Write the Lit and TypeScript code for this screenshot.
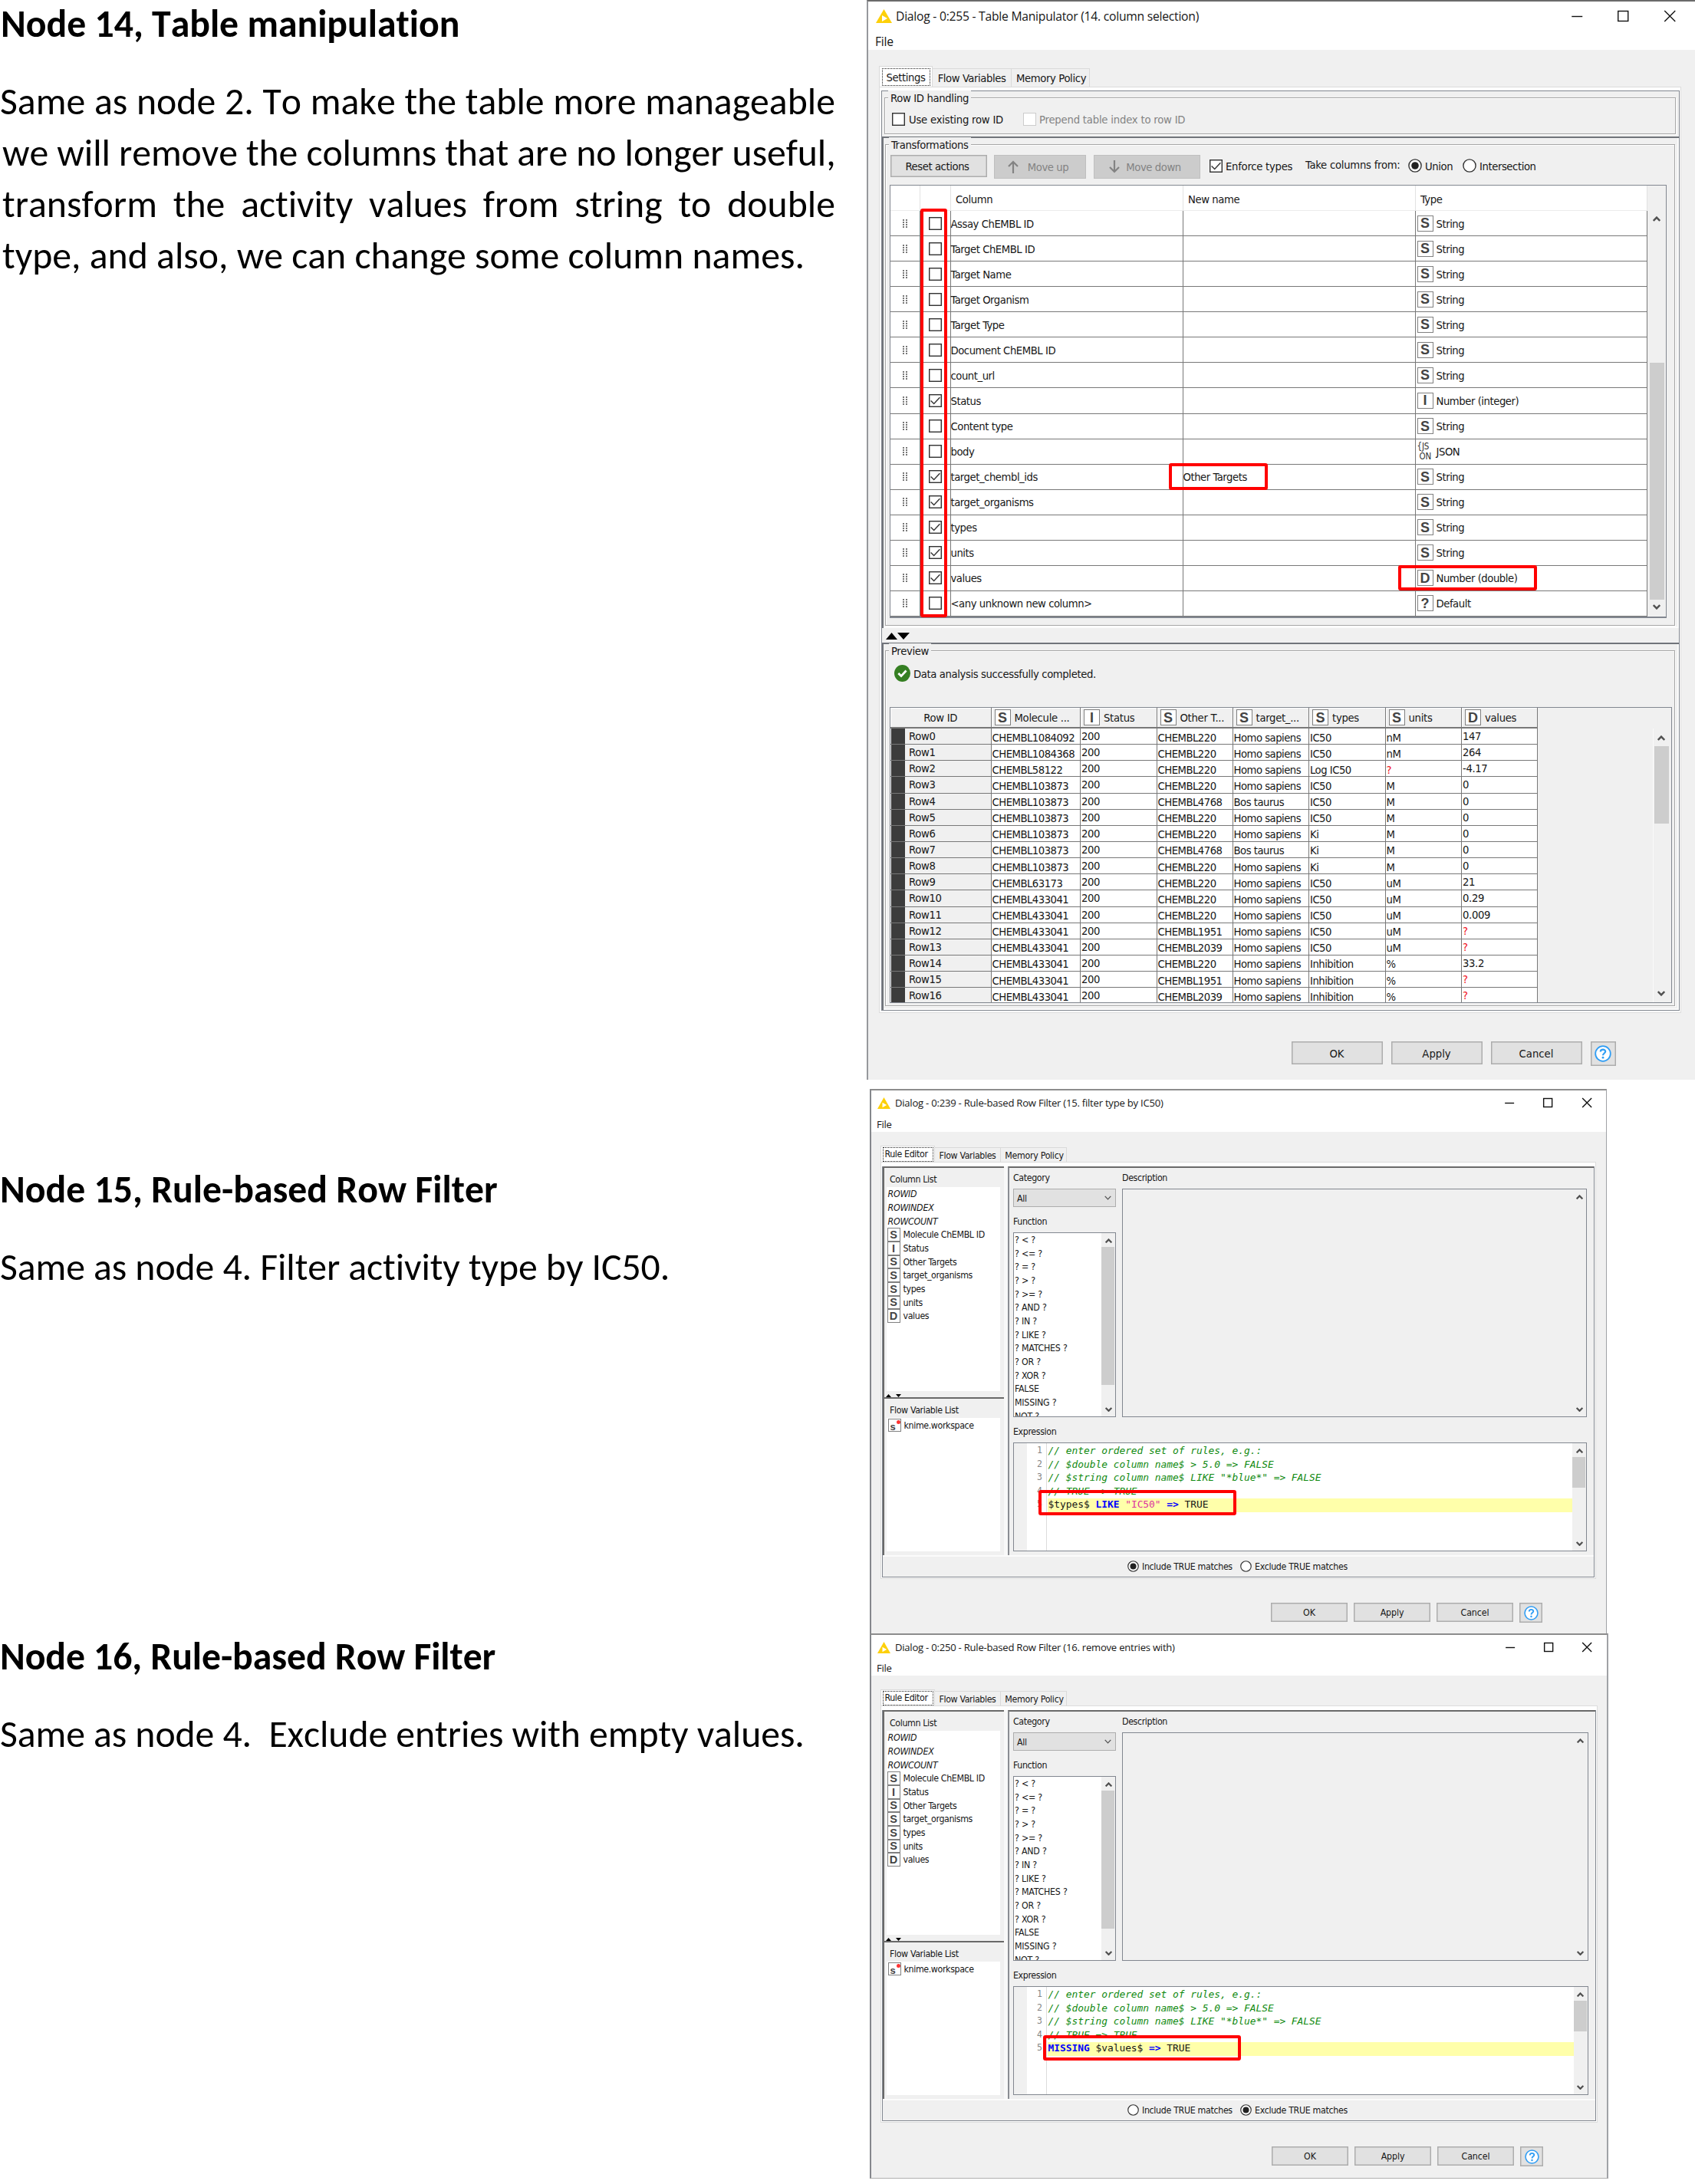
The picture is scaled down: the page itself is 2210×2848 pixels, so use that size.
import { LitElement, html, css, svg, nothing } from "lit";
import { customElement, property } from "lit/decorators.js";
import { classMap } from "lit/directives/class-map.js";

const shared = css`
  * { box-sizing: border-box; }
  :host { display: block; font-family: "DejaVu Sans Condensed", "DejaVu Sans", sans-serif; font-stretch: condensed; color: #161616; white-space: nowrap; }
  svg { display: block; flex: none; }
  .type { display: flex; align-items: center; justify-content: center; flex: none; width: 21px; height: 21px; background: #fff; border: 1px solid #808080; color: #444; font: bold 18px/1 "Liberation Sans", Arial, sans-serif; letter-spacing: 0; }
  .json { display: flex; flex-direction: column; flex: none; width: 21px; font: 11.5px/13px "DejaVu Sans Condensed", "DejaVu Sans", sans-serif; letter-spacing: -0.2px; color: #333; }
  .json .second { padding-left: 3px; }
  .check { flex: none; width: 17px; height: 17px; background: #fff; border: 1px solid #333; box-shadow: inset 0 0 0 0.5px #555; }
  .check.off { border-color: #ccc; box-shadow: none; }
  .bar { display: flex; flex-direction: column; align-items: center; justify-content: space-between; flex: none; background: #f0f0f0; }
  .bar .track { flex: 1; width: 100%; }
  .bar .thumb { background: #cdcdcd; }
  .win { display: flex; flex-direction: column; border-left: 2px solid #96989c; border-top: 2px solid #6a6a6a; background: #f0f0f0; height: 100%; }
  .title { display: flex; align-items: center; background: #fff; font-family: "Open Sans", "Noto Sans", sans-serif; font-stretch: normal; }
  .title .controls { display: flex; margin-left: auto; }
  .title .controls svg { overflow: visible; }
  .menu { display: flex; align-items: center; background: #fff; font-family: "Open Sans", "Noto Sans", sans-serif; font-stretch: normal; }
  .tabs { display: flex; align-items: flex-end; }
  .tab { display: flex; align-items: center; justify-content: center; border: 1px solid #dadada; border-left: 0; border-bottom: 0; }
  .tab.on { background: #fff; border-left: 1px solid #dadada; }
  .focus { display: flex; align-items: center; justify-content: center; border: 1px dotted #222; padding-right: 2px; }
  .pane { border: 1px solid #dcdcdc; background: #fff; }
  .inner { display: flex; flex-direction: column; border: 1px solid #828790; background: #f0f0f0; }
  .buttons { display: flex; }
  .btn { display: flex; align-items: center; justify-content: center; background: #e1e1e1; border: 1px solid #adadad; box-shadow: inset 0 0 0 0.5px #adadad; }
  .btn.off { background: #ccc; border-color: #bfbfbf; box-shadow: none; color: #838383; }
  .mark { position: absolute; border: 4px solid #f00; border-radius: 3px; }
`;

const logo = (w: number, h: number) => html`<svg width=${w} height=${h} viewBox="0 0 21 18" preserveAspectRatio="none"><path d="M10.5 0L21 18H0Z" fill="#fdd00a"/><path d="M8 8L15 12L8 16Z" fill="#fff"/></svg>`;
const controls = (cell: number, s: number) => html`<div class="controls">${[0, 1, 2].map((i) => html`<svg width=${cell} height=${s} viewBox="0 0 ${cell} ${s}" fill="none" stroke="#111" stroke-width="1.4">${
  i === 0 ? svg`<path d="M${cell / 2 - s / 2} ${s / 2 + 0.5}h${s}"/>`
  : i === 1 ? svg`<rect x=${cell / 2 - s / 2 + 0.5} y="0.5" width=${s - 1} height=${s - 1}/>`
  : svg`<path d="M${cell / 2 - s / 2} 0l${s} ${s}M${cell / 2 + s / 2} 0l${-s} ${s}"/>`}</svg>`)}</div>`;
const chevron = (dir: "up" | "down", w = 10, stroke = 2.4) => html`<svg width=${w} height=${w * 0.7} viewBox="0 0 10 7" fill="none" stroke="#505050" stroke-width=${stroke}><path d=${dir === "up" ? "M0.8 6L5 1.6L9.2 6" : "M0.8 1L5 5.4L9.2 1"}/></svg>`;
const typeIcon = (t: string) => t === "JSON"
  ? html`<div class="json"><span>{JS</span><span class="second">ON</span></div>`
  : html`<div class="type">${t}</div>`;
const check = (on: boolean, off = false) => html`<div class=${classMap({ check: true, off })}>${on ? html`<svg width="15" height="15" viewBox="0 0 14 14" fill="none" stroke="#333" stroke-width="1.3"><path d="M1.5 7L5.3 10.8L12.5 3"/></svg>` : nothing}</div>`;
const radio = (on: boolean, s: number) => html`<svg width=${s} height=${s} viewBox="0 0 18 18"><circle cx="9" cy="9" r="8.1" fill="#fff" stroke="#333" stroke-width="1.4"/>${on ? svg`<circle cx="9" cy="9" r="4.8" fill="#222"/>` : nothing}</svg>`;
const help = (s: number) => html`<svg width=${s} height=${s} viewBox="0 0 22 22"><circle cx="11" cy="11" r="9.8" fill="#fff" stroke="#2f9df4" stroke-width="1.8"/><path d="M7.8 8.6C7.8 4.6 14.3 4.7 14.2 8.3C14.1 10.5 11 10.6 11 13.2" fill="none" stroke="#2f9df4" stroke-width="2.2"/><circle cx="11" cy="16.2" r="1.4" fill="#2f9df4"/></svg>`;

type ColumnRow = [name: string, on: boolean, renamed: string, icon: string, type: string];
const COLUMNS: ColumnRow[] = [
  ["Assay ChEMBL ID", false, "", "S", "String"],
  ["Target ChEMBL ID", false, "", "S", "String"],
  ["Target Name", false, "", "S", "String"],
  ["Target Organism", false, "", "S", "String"],
  ["Target Type", false, "", "S", "String"],
  ["Document ChEMBL ID", false, "", "S", "String"],
  ["count_url", false, "", "S", "String"],
  ["Status", true, "", "I", "Number (integer)"],
  ["Content type", false, "", "S", "String"],
  ["body", false, "", "JSON", "JSON"],
  ["target_chembl_ids", true, "Other Targets", "S", "String"],
  ["target_organisms", true, "", "S", "String"],
  ["types", true, "", "S", "String"],
  ["units", true, "", "S", "String"],
  ["values", true, "", "D", "Number (double)"],
  ["<any unknown new column>", false, "", "?", "Default"],
];
const HEADS: [string, string][] = [["S", "Molecule ..."], ["I", "Status"], ["S", "Other T..."], ["S", "target_..."], ["S", "types"], ["S", "units"], ["D", "values"]];
const H = "Homo sapiens", B = "Bos taurus";
const DATA: string[][] = [
  ["CHEMBL1084092", "200", "CHEMBL220", H, "IC50", "nM", "147"],
  ["CHEMBL1084368", "200", "CHEMBL220", H, "IC50", "nM", "264"],
  ["CHEMBL58122", "200", "CHEMBL220", H, "Log IC50", "?", "-4.17"],
  ["CHEMBL103873", "200", "CHEMBL220", H, "IC50", "M", "0"],
  ["CHEMBL103873", "200", "CHEMBL4768", B, "IC50", "M", "0"],
  ["CHEMBL103873", "200", "CHEMBL220", H, "IC50", "M", "0"],
  ["CHEMBL103873", "200", "CHEMBL220", H, "Ki", "M", "0"],
  ["CHEMBL103873", "200", "CHEMBL4768", B, "Ki", "M", "0"],
  ["CHEMBL103873", "200", "CHEMBL220", H, "Ki", "M", "0"],
  ["CHEMBL63173", "200", "CHEMBL220", H, "IC50", "uM", "21"],
  ["CHEMBL433041", "200", "CHEMBL220", H, "IC50", "uM", "0.29"],
  ["CHEMBL433041", "200", "CHEMBL220", H, "IC50", "uM", "0.009"],
  ["CHEMBL433041", "200", "CHEMBL1951", H, "IC50", "uM", "?"],
  ["CHEMBL433041", "200", "CHEMBL2039", H, "IC50", "uM", "?"],
  ["CHEMBL433041", "200", "CHEMBL220", H, "Inhibition", "%", "33.2"],
  ["CHEMBL433041", "200", "CHEMBL1951", H, "Inhibition", "%", "?"],
  ["CHEMBL433041", "200", "CHEMBL2039", H, "Inhibition", "%", "?"],
];

@customElement("table-manipulator")
class TableManipulator extends LitElement {
  static styles = [shared, css`
    :host { position: relative; width: 1080px; height: 1408px; font-size: 14.7px; letter-spacing: -0.42px; }
    .title { height: 39px; padding: 0 3px 2px 10px; font-size: 15.7px; letter-spacing: -0.25px; }
    .title .name { padding-left: 5px; }
    .menu { height: 24px; padding: 1px 0 0 9px; font-size: 15.7px; letter-spacing: -0.28px; }
    .body { padding: 21px 17px 0 14px; }
    .tabs { height: 27px; }
    .tab { height: 24px; }
    .tab.on { width: 70px; height: 27px; }
    .tab.fv { width: 103px; }
    .tab.mp { width: 102px; letter-spacing: -0.36px; padding-left: 2px; }
    .focus { width: 63px; height: 23px; padding: 0; }
    .pane { width: 1046px; height: 1208px; padding: 4px 1px 3px 2px; }
    .inner { height: 1200px; }
    .group { border: 1px solid #a6a6a6; box-shadow: 1px 1px 0 #fff, inset 1px 1px 0 #fff; margin-left: 2px; width: 1030px; }
    .legend { width: fit-content; height: 18px; line-height: 19px; margin: -10px 0 0 4px; padding: 0 3px; background: #f0f0f0; letter-spacing: -0.34px; }
    .ids { height: 59px; padding: 8px 0 0 1px; }
    .ids .group { height: 48px; width: 1032px; }
    .ids .line { display: flex; align-items: center; padding: 11px 0 0 9px; height: 28px; }
    .ids .lbl { padding: 0 0 0 5px; }
    .ids .first { width: 154px; letter-spacing: -0.22px; }
    .ids .muted { color: #838383; letter-spacing: -0.2px; padding-left: 4px; }
    .panel { border-left: 2px solid #70747a; border-top: 2px solid #70747a; box-shadow: inset -2px -2px 0 #fbfbfb; padding-top: 8px; }
    .panel.a { height: 641px; }
    .panel.a .group { height: 628px; }
    .tools { display: flex; margin-top: 5px; height: 31px; padding-left: 6px; }
    .tools .reset { width: 126px; height: 29px; margin-right: 9px; padding: 0 4px 1px 0; }
    .tools .up { width: 120px; margin-right: 10px; gap: 12px; padding-right: 5px; }
    .tools .down { width: 139px; margin-right: 12px; gap: 8px; padding-right: 5px; }
    .tools .opt { display: flex; align-items: center; height: 29px; gap: 4px; padding-bottom: 1px; }
    .tools .enforce { width: 125px; letter-spacing: -0.26px; }
    .tools .from { width: 134px; padding-bottom: 5px; letter-spacing: -0.25px; }
    .tools .union { width: 71px; }
    .grid { display: flex; margin: 8px 0 0 5px; width: 1013px; height: 565px; border: 1px solid #828790; border-bottom-width: 2px; background: #fff; }
    .row, .heads { display: grid; grid-template-columns: 38.5px 40px 303px 303px 302px; }
    .heads { height: 33px; }
    .heads div { display: flex; align-items: center; padding: 2px 0 0 6.5px; border-right: 1px solid #e2e2e2; border-bottom: 1px solid #ececec; }
    .row { height: 33.07px; letter-spacing: -0.45px; }
    .row > div { display: flex; align-items: center; border-right: 1px solid #787878; border-bottom: 1px solid #787878; }
    .row > .c { justify-content: center; }
    .row > .t { gap: 4px; padding-left: 2px; }
    .grid .bar { width: 24px; padding: 34px 0 3px; }
    .grid .track { padding: 177px 2px 0 3px; }
    .grid .thumb { height: 309px; }
    .grid .chev { padding: 6px 0 7px; }
    .divider { height: 19px; display: flex; padding: 6px 0 0 4px; }
    .panel.b { height: 479px; }
    .panel.b .group { height: 464px; }
    .status { display: flex; align-items: center; height: 22px; margin: 10px 0 0 11px; gap: 4px; letter-spacing: -0.38px; }
    .preview { display: flex; margin: 33px 0 0 5px; width: 1020px; height: 386px; border: 1px solid #828790; overflow: hidden; }
    .prow { display: grid; grid-template-columns: 131.5px 116.5px 99.5px 99px 99.5px 99.5px 99.5px 99px; height: 21.15px; line-height: 20px; letter-spacing: -0.5px; }
    .prow > div { border-right: 1px solid #787878; border-bottom: 1px solid #787878; padding-left: 1px; background: #fff; overflow: hidden; }
    .prow > .s { padding-top: 1.5px; }
    .prow > .n { letter-spacing: -0.35px; }
    .prow > .miss { color: #f01020; }
    .prow > .id { display: flex; background: #f0f0f0; padding-left: 1px; letter-spacing: -0.35px; }
    .sw { width: 18px; background: #3c3c3c; margin-right: 5px; flex: none; }
    .prow.top { height: 27px; letter-spacing: -0.3px; }
    .prow.top > div { display: flex; align-items: center; gap: 5px; padding-left: 4px; background: #f0f0f0; border-bottom: 2px solid #787878; box-shadow: inset 1px 1px 0 #fff; }
    .prow.top > .rid { justify-content: center; padding: 0; }
    .preview .bar { width: 21px; margin: 27px 3px 0 auto; border-left: 1px solid #fafafa; }
    .preview .bar .track { padding: 0 0 0 1px; }
    .preview .thumb { height: 101px; }
    .preview .chev { padding: 9px 0 7px; }
    .preview .chev.dn { padding: 7px 0 8px; }
    .buttons { padding: 37px 0 0 538px; gap: 11px; letter-spacing: 0; }
    .buttons .btn { width: 119px; height: 30px; padding-right: 1px; }
    .buttons .btn.q { width: 33px; height: 32px; }
    .m1 { left: 70px; top: 272px; width: 35px; height: 533px; }
    .m2 { left: 394px; top: 604px; width: 129px; height: 35px; }
    .m3 { left: 693px; top: 737px; width: 181px; height: 33px; }
  `];
  render() {
    const arrow = (d: string) => html`<svg width="14" height="17" viewBox="0 0 14 17" fill="none" stroke="#838383" stroke-width="2.2"><path d=${d}/></svg>`;
    return html`<div class="win">
      <div class="title">${logo(21, 18)}<span class="name">Dialog - 0:255 - Table Manipulator (14. column selection)</span>${controls(60.5, 14)}</div>
      <div class="menu">File</div>
      <div class="body">
        <div class="tabs"><div class="tab on"><div class="focus">Settings</div></div><div class="tab fv">Flow Variables</div><div class="tab mp">Memory Policy</div></div>
        <div class="pane"><div class="inner">
          <div class="ids"><div class="group"><div class="legend">Row ID handling</div>
            <div class="line">${check(false)}<span class="lbl first">Use existing row ID</span>${check(false, true)}<span class="lbl muted">Prepend table index to row ID</span></div></div></div>
          <div class="panel a"><div class="group"><div class="legend">Transformations</div>
            <div class="tools">
              <div class="btn reset">Reset actions</div>
              <div class="btn off up">${arrow("M7 17V2M1 8L7 2L13 8")}Move up</div>
              <div class="btn off down">${arrow("M7 0V15M1 9L7 15L13 9")}Move down</div>
              <div class="opt enforce">${check(true)}Enforce types</div>
              <div class="opt from">Take columns from:</div>
              <div class="opt union">${radio(true, 18)}Union</div>
              <div class="opt">${radio(false, 18)}Intersection</div>
            </div>
            <div class="grid"><div>
              <div class="heads"><div></div><div></div><div>Column</div><div>New name</div><div>Type</div></div>
              ${COLUMNS.map(([name, on, renamed, icon, type]) => html`<div class="row">
                <div class="c"><svg width="8" height="11" viewBox="0 0 8 11" shape-rendering="crispEdges" fill="#777">${[0, 3, 6, 9].map((y) => svg`<rect x="1" y=${y} width="2" height="2"/><rect x="5" y=${y} width="2" height="2"/>`)}</svg></div>
                <div class="c">${check(on)}</div><div>${name}</div><div>${renamed}</div><div class="t">${typeIcon(icon)}${type}</div></div>`)}
            </div><div class="bar"><div class="chev">${chevron("up")}</div><div class="track"><div class="thumb"></div></div><div class="chev">${chevron("down")}</div></div></div>
          </div></div>
          <div class="divider"><svg width="32" height="9" viewBox="0 0 32 9"><path d="M1 9L8.5 0L16 9ZM16 0H32L24 9Z" fill="#000"/></svg></div>
          <div class="panel b"><div class="group"><div class="legend">Preview</div>
            <div class="status"><svg width="21" height="22" viewBox="0 0 21 22"><ellipse cx="10.5" cy="11" rx="10.5" ry="11" fill="#357f22"/><path d="M5.3 11L9 14.6L15.5 7.5" fill="none" stroke="#fff" stroke-width="2.8"/></svg>Data analysis successfully completed.</div>
            <div class="preview"><div>
              <div class="prow top"><div class="rid">Row ID</div>${HEADS.map(([t, n]) => html`<div>${typeIcon(t)}${n}</div>`)}</div>
              ${DATA.map((r, i) => html`<div class="prow"><div class="id"><div class="sw"></div>Row${i}</div>${r.map((v, c) => html`<div class=${classMap({ s: c !== 1 && c !== 6, n: c === 1 || c === 6, miss: v === "?" })}>${v}</div>`)}</div>`)}
            </div><div class="bar"><div class="chev">${chevron("up")}</div><div class="track"><div class="thumb"></div></div><div class="chev dn">${chevron("down")}</div></div></div>
          </div></div>
        </div></div>
        <div class="buttons"><div class="btn">OK</div><div class="btn">Apply</div><div class="btn">Cancel</div><div class="btn q">${help(22)}</div></div>
      </div>
    </div><div class="mark m1"></div><div class="mark m2"></div><div class="mark m3"></div>`;
  }
}

const FIELDS: [string, string][] = [["S", "Molecule ChEMBL ID"], ["I", "Status"], ["S", "Other Targets"], ["S", "target_organisms"], ["S", "types"], ["S", "units"], ["D", "values"]];
const FUNCTIONS = ["? < ?", "? <= ?", "? = ?", "? > ?", "? >= ?", "? AND ?", "? IN ?", "? LIKE ?", "? MATCHES ?", "? OR ?", "? XOR ?", "FALSE", "MISSING ?", "NOT ?"];
const COMMENTS = ["// enter ordered set of rules, e.g.:", "// $double column name$ > 5.0 => FALSE", "// $string column name$ LIKE \"*blue*\" => FALSE", "// TRUE => TRUE"];

@customElement("rule-filter")
class RuleFilter extends LitElement {
  @property() name = "";
  @property({ type: Boolean }) exclude = false;
  @property({ attribute: false }) rule: [string, string][] = [];
  static styles = [shared, css`
    :host { position: relative; width: 961px; height: 710px; font-size: 12.3px; letter-spacing: -0.37px; }
    :host([exclude]) { width: 962.5px; height: 711px; }
    .win { border-left-color: #85878c; border-right: 1px solid #a0a2a6; border-top-color: #8c8c8c; }
    :host([exclude]) .win { border-bottom: 1px solid #b0b0b0; border-right-width: 2px; }
    .title { height: 35px; padding: 0 0 3px 8px; font-size: 13.1px; letter-spacing: -0.24px; }
    .title .name { padding-left: 6px; }
    .menu { height: 19px; padding: 0 0 2px 7px; font-size: 13.1px; letter-spacing: -0.25px; }
    .body { padding: 18px 0 0 12px; }
    :host([exclude]) .menu { height: 18px; }
    .tabs { height: 21px; }
    .tab { height: 19px; }
    .tab.on { width: 71px; height: 21px; }
    .tab.fv { width: 86px; padding-top: 1px; }
    .tab.mp { width: 86px; letter-spacing: -0.3px; padding: 1px 0 0 2px; }
    .focus { width: 66px; height: 19px; padding-right: 4px; }
    .pane { width: 933px; height: 544px; padding: 5px 1px 1px; }
    .inner { height: 536px; border-top: 0; }
    .split { display: flex; height: 507px; }
    .left { width: 158px; border-left: 2px solid #696969; display: flex; flex-direction: column; }
    .cap { border-top: 2px solid #696969; height: 27px; padding: 8px 0 0 7px; line-height: 15px; }
    .list { background: #fff; margin: 0 5px 0 3px; height: 266px; padding-top: 0.5px; }
    .list.vars { height: 174px; padding-top: 1px; }
    .arrows { height: 8px; padding: 4px 0 0 2px; }
    .it { display: flex; align-items: center; height: 17.67px; gap: 4px; padding-left: 0.5px; }
    .it.sys { font-style: italic; padding-left: 1.5px; letter-spacing: -0.25px; }
    .type { width: 17px; height: 17.67px; font-size: 14.5px; }
    .type.var { position: relative; font-size: 13px; margin-left: 1px; padding: 3px 4px 0 0; height: 17px; }
    .dot { position: absolute; right: 0; top: 1px; width: 5px; height: 5px; border-radius: 50%; background: #f33; }
    .gap { width: 5px; background: #f8f8f8; }
    .right { flex: 1; border-left: 2px solid #8a8d92; border-top: 2px solid #696969; padding-left: 5px; }
    .upper { display: flex; gap: 8px; height: 325px; }
    .lab { height: 27px; line-height: 27px; }
    .lab.low { height: 33px; padding-top: 6px; }
    .combo { display: flex; align-items: center; justify-content: space-between; width: 134px; height: 24px; background: #e1e1e1; border: 1px solid #adadad; padding: 1px 5px 0 4px; }
    .box { display: flex; border: 1px solid #828790; }
    .fn { width: 134px; height: 241px; background: #fff; justify-content: space-between; }
    .fns { padding: 1px 0 0 1px; overflow: hidden; line-height: 17.65px; letter-spacing: -0.22px; }
    .desc { width: 606px; height: 298px; justify-content: flex-end; }
    .bar { width: 18px; padding: 7px 0 6px; }
    .bar .track { padding: 5px 1px 4px 0; }
    .fn .thumb { height: 180px; }
    .ed { width: 748px; height: 142px; background: #fff; }
    .ed .thumb { height: 40px; }
    .fold { width: 17px; background: #f0f0f0; }
    .nums { width: 26px; border-right: 1px solid #dcdcdc; padding: 1px 5px 0 0; text-align: right; color: #868686; }
    .code, .nums { font-family: "DejaVu Sans Mono", monospace; font-stretch: normal; font-size: 12.9px; line-height: 17.5px; letter-spacing: -0.02px; }
    .nums { font-size: 11.5px; }
    .code { flex: 1; white-space: pre; padding-top: 1px; }
    .ln { padding-left: 1.5px; height: 17.5px; }
    .cm { color: #118a11; font-style: italic; }
    .cur { background: #ffffaa; margin: 1px 0 0 1px; padding-left: 0.5px; line-height: 16.5px; }
    .kw { color: #00f; font-weight: bold; }
    .str { color: #dc32a0; }
    .foot { display: flex; align-items: center; flex: 1; border-top: 2px solid #fbfbfb; padding: 0 0 1px 319px; }
    .foot .r1 { width: 132px; padding-left: 4px; letter-spacing: -0.33px; }
    .foot .r2 { padding-left: 4px; letter-spacing: -0.33px; }
    .buttons { padding: 31px 0 0 509px; gap: 8px; letter-spacing: -0.1px; }
    .buttons .btn { width: 100px; height: 25px; }
    .buttons .btn.q { width: 30px; height: 26px; }
    :host([exclude]) .pane { width: 934.5px; }
    :host([exclude]) .desc { width: 607.5px; }
    :host([exclude]) .ed { width: 749.5px; }
    :host([exclude]) .buttons { padding-left: 510px; }
    .mark { left: 219.5px; top: 523px; width: 258px; height: 33px; }
    :host([exclude]) .mark { left: 226px; top: 524px; height: 33px; }
  `];
  render() {
    const bar = (thumb: boolean) => html`<div class="bar">${chevron("up", 9)}<div class="track">${thumb ? html`<div class="thumb"></div>` : nothing}</div>${chevron("down", 9)}</div>`;
    return html`<div class="win">
      <div class="title">${logo(17, 15)}<span class="name">${this.name}</span>${controls(50.3, 12)}</div>
      <div class="menu">File</div>
      <div class="body">
        <div class="tabs"><div class="tab on"><div class="focus">Rule Editor</div></div><div class="tab fv">Flow Variables</div><div class="tab mp">Memory Policy</div></div>
        <div class="pane"><div class="inner">
          <div class="split">
            <div class="left">
              <div class="cap">Column List</div>
              <div class="list">${["ROWID", "ROWINDEX", "ROWCOUNT"].map((t) => html`<div class="it sys">${t}</div>`)}${FIELDS.map(([t, n]) => html`<div class="it">${typeIcon(t)}${n}</div>`)}</div>
              <div class="arrows"><svg width="22" height="4" viewBox="0 0 22 4"><path d="M0 4L3.5 0L7 4ZM13 0H20L16.5 4Z" fill="#000"/></svg></div>
              <div class="cap">Flow Variable List</div>
              <div class="list vars"><div class="it"><div class="type var">s<span class="dot"></span></div>knime.workspace</div></div>
            </div>
            <div class="gap"></div>
            <div class="right">
              <div class="upper">
                <div><div class="lab">Category</div><div class="combo">All${chevron("down", 9, 1.4)}</div><div class="lab low">Function</div>
                  <div class="box fn"><div class="fns">${FUNCTIONS.map((f) => html`<div>${f}</div>`)}</div>${bar(true)}</div></div>
                <div><div class="lab">Description</div><div class="box desc">${bar(false)}</div></div>
              </div>
              <div class="lab low">Expression</div>
              <div class="box ed"><div class="fold"></div><div class="nums">${[1, 2, 3, 4, 5].map((n) => html`<div>${n}</div>`)}</div>
                <div class="code">${COMMENTS.map((c) => html`<div class="ln cm">${c}</div>`)}<div class="ln cur">${this.rule.map(([k, t]) => html`<span class=${k}>${t}</span>`)}</div></div>${bar(true)}</div>
            </div>
          </div>
          <div class="foot">${radio(!this.exclude, 15)}<span class="r1">Include TRUE matches</span>${radio(this.exclude, 15)}<span class="r2">Exclude TRUE matches</span></div>
        </div></div>
        <div class="buttons"><div class="btn">OK</div><div class="btn">Apply</div><div class="btn">Cancel</div><div class="btn q">${help(19)}</div></div>
      </div>
    </div><div class="mark"></div>`;
  }
}

@customElement("app-root")
class AppRoot extends LitElement {
  static styles = css`
    * { box-sizing: border-box; }
    :host { display: flex; width: 2210px; height: 2848px; background: #fff; overflow: hidden; color: #000; }
    .text { width: 1130px; flex: none; margin-top: -2px; font: 49.75px/67px Carlito, Lato, sans-serif; font-kerning: none; font-variant-ligatures: none; white-space: nowrap; }
    .sec { height: 1520px; padding-right: 41px; }
    .sec.mid { height: 609px; }
    .sec .h { font-weight: bold; height: 101px; }
    .sec.first .h { padding-left: 1px; }
    .j { text-align: justify; text-align-last: justify; }
    .in { padding-left: 3px; }
    .snug { letter-spacing: -0.08px; }
    .shots { display: flex; flex-direction: column; }
    rule-filter { margin-left: 4px; }
    .gap { height: 12px; }
  `;
  render() {
    return html`
      <div class="text">
        <div class="sec first"><div class="h">Node 14, Table manipulation</div>
          <div class="j">Same as node 2. To make the table more manageable</div>
          <div class="j in snug">we will remove the columns that are no longer useful,</div>
          <div class="j in">transform the activity values from string to double</div>
          <div class="in">type, and also, we can change some column names.</div></div>
        <div class="sec mid"><div class="h">Node 15, Rule-based Row Filter</div><div class="snug">Same as node 4. Filter activity type by IC50.</div></div>
        <div class="sec"><div class="h snug">Node 16, Rule-based Row Filter</div><div class="snug">Same as node 4.&nbsp; Exclude entries with empty values.</div></div>
      </div>
      <div class="shots">
        <table-manipulator></table-manipulator>
        <div class="gap"></div>
        <rule-filter .name=${"Dialog - 0:239 - Rule-based Row Filter (15. filter type by IC50)"} .rule=${[["", "$types$ "], ["kw", "LIKE"], ["str", " \"IC50\" "], ["kw", "=>"], ["", " TRUE"]]}></rule-filter>
        <rule-filter exclude .name=${"Dialog - 0:250 - Rule-based Row Filter (16. remove entries with)"} .rule=${[["kw", "MISSING"], ["", " $values$ "], ["kw", "=>"], ["", " TRUE"]]}></rule-filter>
      </div>`;
  }
}
